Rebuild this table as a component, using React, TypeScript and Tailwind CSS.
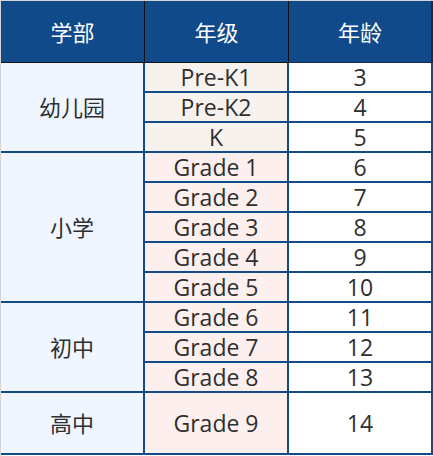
import React from "react"

interface Row {
  grade: string;
  age: string;
  tall?: boolean;
}

interface Section {
  name: string;
  bg: string;
  rows: Row[];
}

const sections: Section[] = [
  {
    name: "幼儿园",
    bg: "bg-[#f8f2ef]",
    rows: [
      { grade: "Pre-K1", age: "3" },
      { grade: "Pre-K2", age: "4" },
      { grade: "K", age: "5" },
    ],
  },
  {
    name: "小学",
    bg: "bg-[#fdefee]",
    rows: [
      { grade: "Grade 1", age: "6" },
      { grade: "Grade 2", age: "7" },
      { grade: "Grade 3", age: "8" },
      { grade: "Grade 4", age: "9" },
      { grade: "Grade 5", age: "10" },
    ],
  },
  {
    name: "初中",
    bg: "bg-[#fdefee]",
    rows: [
      { grade: "Grade 6", age: "11" },
      { grade: "Grade 7", age: "12" },
      { grade: "Grade 8", age: "13" },
    ],
  },
  {
    name: "高中",
    bg: "bg-[#fdefee]",
    rows: [{ grade: "Grade 9", age: "14", tall: true }],
  },
]

const font = { fontFamily: '"Open Sans", "Noto Sans CJK SC", sans-serif' }

const App: React.FC = () => {
  return (
    <div className="w-[433px] h-[456px] bg-white border-l border-t border-[#d4d4d4]" style={font}>
      <table className="w-[432px] border-separate border-spacing-0 table-fixed text-[22px] leading-none text-[#2f2f2f]">
        <colgroup>
          <col className="w-[144px]" />
          <col className="w-[144px]" />
          <col className="w-[144px]" />
        </colgroup>
        <thead>
          <tr>
            <th className="h-[62px] p-0 font-normal text-white bg-[#104a8a] border-r border-b border-[#111111]">学部</th>
            <th className="h-[62px] p-0 font-normal text-white bg-[#104a8a] border-r border-b border-[#111111]">年级</th>
            <th className="h-[62px] p-0 font-normal text-white bg-[#104a8a] border-r-2 border-b border-[#1a2a40]">年龄</th>
          </tr>
        </thead>
        <tbody>
          {sections.map((s) =>
            s.rows.map((r, i) => (
              <tr key={s.name + r.grade}>
                {i === 0 && (
                  <td
                    rowSpan={s.rows.length}
                    className="p-0 text-center bg-[#eff6ff] border-r-2 border-b-2 border-[#134b89]"
                  >
                    {s.name}
                  </td>
                )}
                <td
                  className={`${r.tall ? "h-[62px]" : "h-[30px]"} p-0 text-center text-[23px] ${s.bg} border-r-2 border-b-2 border-[#134b89]`}
                >
                  {r.grade}
                </td>
                <td className="p-0 text-center text-[23px] bg-white border-r-2 border-b-2 border-[#134b89]">{r.age}</td>
              </tr>
            ))
          )}
        </tbody>
      </table>
    </div>
  )
}

export default App
